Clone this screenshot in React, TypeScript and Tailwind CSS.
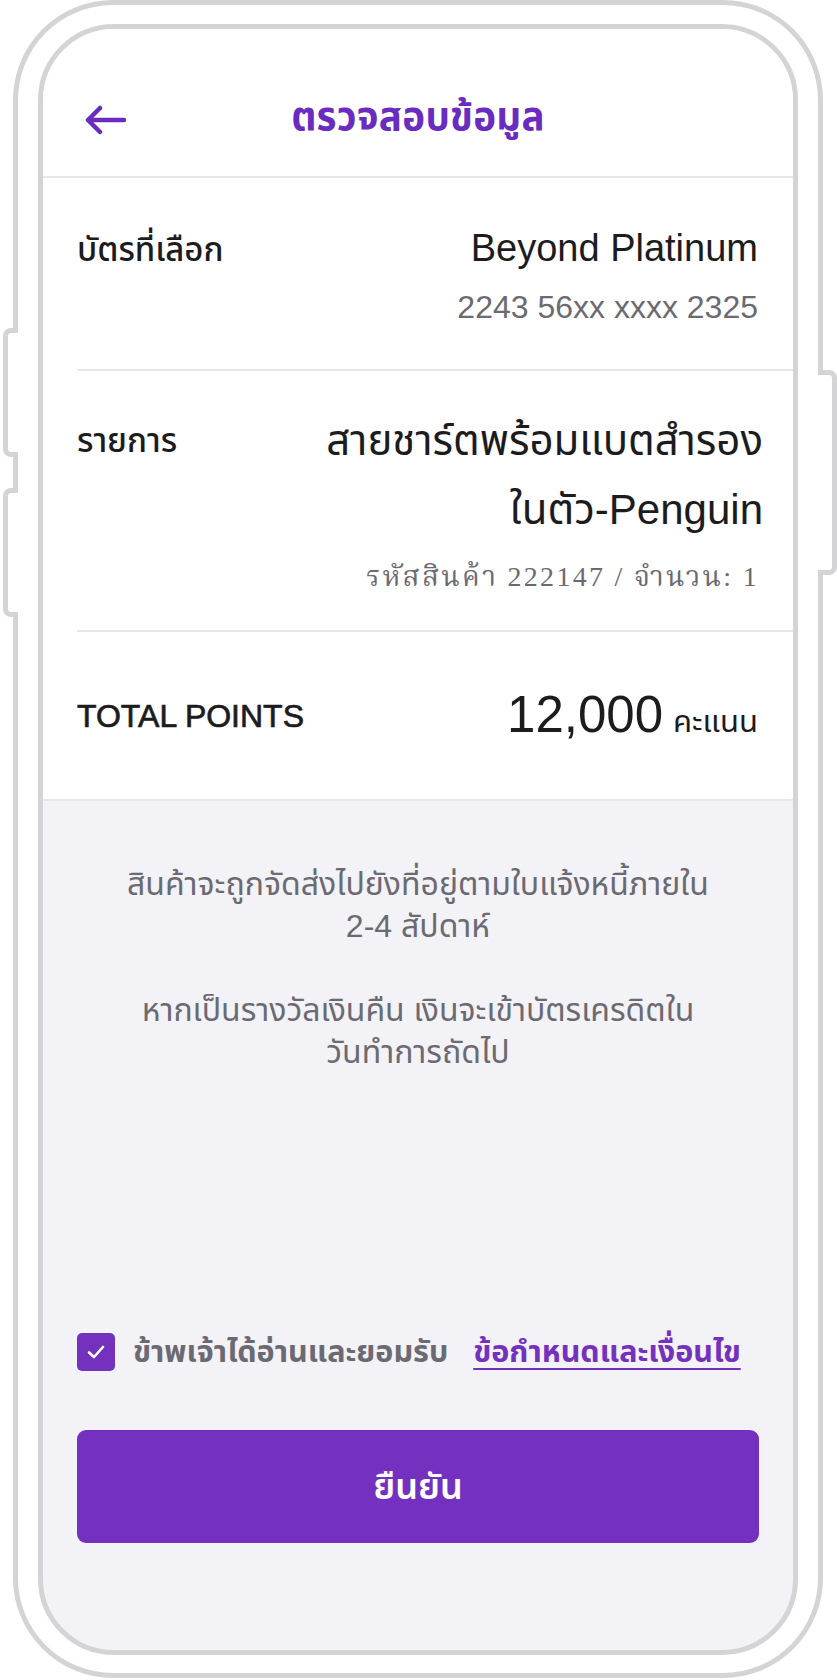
import React from "react";

function BackArrow() {
  return (
    <svg width="42" height="32" viewBox="0 0 42 32" fill="none">
      <path
        d="M3 16 H39 M3 16 L15 4 M3 16 L15 28"
        stroke="#6a2bc1"
        strokeWidth="4.5"
        strokeLinecap="round"
        strokeLinejoin="round"
      />
    </svg>
  );
}

function Check() {
  return (
    <svg width="22" height="22" viewBox="0 0 22 22" fill="none">
      <path d="M4 11.5 L9 16 L18 6" stroke="white" strokeWidth="2.6" strokeLinecap="round" strokeLinejoin="round" />
    </svg>
  );
}

export default function App() {
  return (
    <div className="w-[837px] h-[1680px] bg-white relative font-['Liberation_Sans','Noto_Sans_Thai','Noto_Sans',sans-serif]">
      <div className="pl-[13px]">
        <div className="w-[810px] h-[1678px] border-[5px] border-[#d4d4d6] rounded-[100px] pt-[19px] px-[20px] pb-[18px] bg-white">
          <div className="h-[1631px] border-[5px] border-[#d4d4d6] rounded-[76px] overflow-hidden flex flex-col bg-[#f3f2f6]">
            {/* white section */}
            <div className="bg-white border-b-2 border-[#e7e6ec]">
              {/* header */}
              <div className="h-[149px] border-b-2 border-[#e7e6ec] pt-[68px]">
                <div className="h-[40px] grid grid-cols-[1fr_auto_1fr] items-center">
                  <div className="pl-[42px] pt-[6px] flex items-center">
                    <BackArrow />
                  </div>
                  <div className="text-[38.5px] font-bold text-[#6a2bc1] leading-[40px] tracking-[0.3px]">ตรวจสอบข้อมูล</div>
                  <div />
                </div>
              </div>
              {/* row 1 */}
              <div className="ml-[34px] pr-[35px] border-b-2 border-[#e7e6ec] pt-[50px] pb-[42px] flex justify-between items-start">
                <div className="text-[33px] font-medium text-[#1c1c1e] leading-[40px] pt-[2px]">บัตรที่เลือก</div>
                <div className="flex flex-col items-end">
                  <div className="text-[38px] text-[#1c1c1e] leading-[40px]">Beyond Platinum</div>
                  <div className="text-[32px] text-[#6b6a72] leading-[40px] mt-[19px]">2243 56xx xxxx 2325</div>
                </div>
              </div>
              {/* row 2 */}
              <div className="ml-[34px] pr-[30px] border-b-2 border-[#e7e6ec] pt-[35px] pb-[35px] flex justify-between items-start">
                <div className="text-[33px] font-medium text-[#1c1c1e] leading-[69px] shrink-0">รายการ</div>
                <div className="flex flex-col items-end text-right">
                  <div className="text-[42px] text-[#1c1c1e] leading-[69px]">สายชาร์ตพร้อมแบตสำรอง</div>
                  <div className="text-[42px] text-[#1c1c1e] leading-[69px]">ในตัว-Penguin</div>
                  <div className="text-[28px] text-[#6b6a72] leading-[36px] mt-[15px] pr-[4px] tracking-[2.3px] font-['Liberation_Serif','Noto_Serif_Thai',serif]">
                    รหัสสินค้า 222147 / จำนวน: 1
                  </div>
                </div>
              </div>
              {/* row 3 */}
              <div className="ml-[34px] pr-[35px] h-[167px] flex justify-between items-center">
                <div className="text-[32px] text-[#1c1c1e] [-webkit-text-stroke:0.7px_#1c1c1e]">TOTAL POINTS</div>
                <div className="flex items-baseline gap-[10px]">
                  <span className="text-[51px] text-[#1c1c1e]">12,000</span>
                  <span className="text-[31px] text-[#1c1c1e]">คะแนน</span>
                </div>
              </div>
            </div>
            {/* gray section */}
            <div className="flex-1 flex flex-col">
              <div className="pt-[62px] text-center text-[32px] text-[#6b6a72] leading-[42px]">
                <p>
                  สินค้าจะถูกจัดส่งไปยังที่อยู่ตามใบแจ้งหนี้ภายใน
                  <br />
                  2-4 สัปดาห์
                </p>
                <p className="mt-[42px]">
                  หากเป็นรางวัลเงินคืน เงินจะเข้าบัตรเครดิตใน
                  <br />
                  วันทำการถัดไป
                </p>
              </div>
              <div className="mt-auto ml-[34px] flex items-center h-[38px]">
                <div className="w-[38px] h-[38px] rounded-[5px] bg-[#7431be] flex items-center justify-center shrink-0">
                  <Check />
                </div>
                <span className="ml-[18px] text-[30.5px] font-bold text-[#6b6a72]">ข้าพเจ้าได้อ่านและยอมรับ</span>
                <span className="ml-[25px] text-[30.5px] font-bold text-[#7431be] underline underline-offset-[6px] decoration-2">
                  ข้อกำหนดและเงื่อนไข
                </span>
              </div>
              <div className="mx-[34px] mt-[59px] mb-[107px] h-[113px] rounded-[9px] bg-[#7430be] flex items-center justify-center">
                <span className="text-[36px] font-semibold text-white">ยืนยัน</span>
              </div>
            </div>
          </div>
        </div>
      </div>
      {/* side buttons */}
      <div className="absolute left-[3px] top-[328px] w-[15px] h-[129px] border-[5px] border-r-0 border-[#d4d4d6] rounded-l-[8px] bg-white" />
      <div className="absolute left-[3px] top-[488px] w-[15px] h-[129px] border-[5px] border-r-0 border-[#d4d4d6] rounded-l-[8px] bg-white" />
      <div className="absolute left-[818px] top-[370px] w-[19px] h-[205px] border-[5px] border-l-0 border-[#d4d4d6] rounded-r-[8px] bg-white" />
    </div>
  );
}
